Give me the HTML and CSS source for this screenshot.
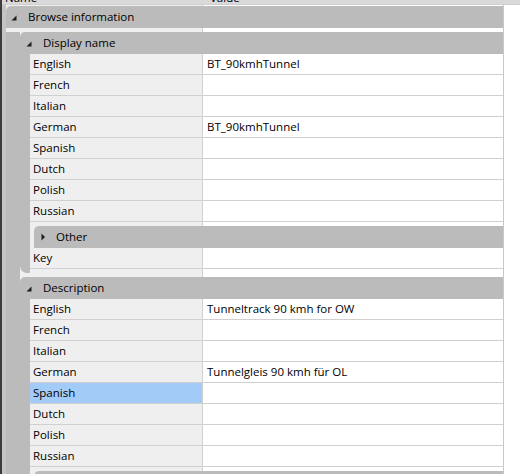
FILE: index.html
```html
<!DOCTYPE html>
<html>
<head>
<meta charset="utf-8">
<link rel="stylesheet" href="styles.css">
</head>
<body>
<div class="app">
  <div class="edge"></div>
  <div class="main">
    <div class="colhead"><span class="ch ch-name">Name</span><span class="ch ch-value">Value</span></div>
    <div class="grid">
      <section class="cat top">
        <div class="cat-head"><svg class="tri" width="6" height="6" viewBox="0 0 6 6"><polygon points="5.5,0.5 5.5,5.5 0.5,5.5"/></svg><span>Browse information</span></div>
        <div class="cat-body outer-body">
          <section class="cat">
            <div class="cat-head"><svg class="tri" width="6" height="6" viewBox="0 0 6 6"><polygon points="5.5,0.5 5.5,5.5 0.5,5.5"/></svg><span>Display name</span></div>
            <div class="cat-body">
              <div class="row"><div class="pname">English</div><div class="pval">BT_90kmhTunnel</div></div>
              <div class="row"><div class="pname">French</div><div class="pval"></div></div>
              <div class="row"><div class="pname">Italian</div><div class="pval"></div></div>
              <div class="row"><div class="pname">German</div><div class="pval">BT_90kmhTunnel</div></div>
              <div class="row"><div class="pname">Spanish</div><div class="pval"></div></div>
              <div class="row"><div class="pname">Dutch</div><div class="pval"></div></div>
              <div class="row"><div class="pname">Polish</div><div class="pval"></div></div>
              <div class="row"><div class="pname">Russian</div><div class="pval"></div></div>
              <section class="cat collapsed">
                <div class="cat-head"><svg class="tri-c" width="5" height="8" viewBox="0 0 5 8"><polygon points="0.5,0.5 4,4 0.5,7.5"/></svg><span>Other</span></div>
              </section>
              <div class="row"><div class="pname">Key</div><div class="pval"></div></div>
            </div>
          </section>
          <section class="cat">
            <div class="cat-head"><svg class="tri" width="6" height="6" viewBox="0 0 6 6"><polygon points="5.5,0.5 5.5,5.5 0.5,5.5"/></svg><span>Description</span></div>
            <div class="cat-body">
              <div class="row"><div class="pname">English</div><div class="pval">Tunneltrack 90 kmh for OW</div></div>
              <div class="row"><div class="pname">French</div><div class="pval"></div></div>
              <div class="row"><div class="pname">Italian</div><div class="pval"></div></div>
              <div class="row"><div class="pname">German</div><div class="pval">Tunnelgleis 90 kmh für OL</div></div>
              <div class="row selected"><div class="pname">Spanish</div><div class="pval"></div></div>
              <div class="row"><div class="pname">Dutch</div><div class="pval"></div></div>
              <div class="row"><div class="pname">Polish</div><div class="pval"></div></div>
              <div class="row"><div class="pname">Russian</div><div class="pval"></div></div>
              <section class="cat collapsed">
                <div class="cat-head"><svg class="tri-c" width="5" height="8" viewBox="0 0 5 8"><polygon points="0.5,0.5 4,4 0.5,7.5"/></svg><span>Other</span></div>
              </section>
            </div>
          </section>
        </div>
      </section>
    </div>
  </div>
</div>
</body>
</html>
```

FILE: styles.css
```css
html, body {
  margin: 0;
  padding: 0;
  background: #ffffff;
}
body {
  font-family: "Open Sans", "Noto Sans", sans-serif;
  font-size: 11.5px;
  color: #000;
  overflow: hidden;
  width: 520px;
  height: 474px;
}
.app {
  display: flex;
  height: 474px;
  overflow: hidden;
}
.edge {
  width: 2px;
  flex: none;
  background: #3c3c3c;
}
.main {
  flex: 1;
  display: flex;
  flex-direction: column;
  min-width: 0;
}
.colhead {
  height: 20px;
  margin-top: -16px;
  background: #d9d9d9;
  border-bottom: 1px solid #d0d0d0;
  display: flex;
  align-items: flex-end;
  flex: none;
  line-height: 14px;
}
.ch {
  display: block;
  height: 16px;
  margin-bottom: -3px;
}
.ch-name {
  width: 202px;
  padding-left: 3px;
}
.ch-value {
  padding-left: 3px;
}
.grid {
  flex: 1;
  position: relative;
  padding-left: 4px;
  background: linear-gradient(to right,
    #c4c4c4 0, #c4c4c4 4px,
    #efefef 4px, #efefef 200px,
    #d0d0d0 200px, #d0d0d0 201px,
    #ffffff 201px, #ffffff 501px,
    #c8c8c8 501px, #c8c8c8 502px,
    #ffffff 502px);
}
.cat {
  margin-top: 4px;
}
.cat.top {
  margin-top: 1px;
  width: 497px;
}
.cat-head {
  height: 22px;
  background: #bbbbbb;
  border-top-left-radius: 5px;
  display: flex;
  align-items: center;
  padding-left: 6px;
}
.cat.top > .cat-head {
  padding-left: 5px;
}
.tri {
  display: block;
  fill: #1e1e1e;
  margin-right: 11px;
  margin-top: 1px;
}
.cat-head span {
  display: block;
  line-height: 16px;
}
.cat-body {
  border-left: 10px solid #bbbbbb;
  border-bottom-left-radius: 7px;
  padding-bottom: 4px;
}
.cat-body.outer-body {
  border-left-width: 14px;
  border-bottom-left-radius: 0;
  padding-bottom: 0;
}
.cat.collapsed {
  margin-left: 4px;
}
.cat.collapsed > .cat-head {
  padding-left: 7px;
}
.tri-c {
  display: block;
  fill: #1e1e1e;
  margin-right: 10px;
}
.row {
  display: flex;
  height: 20px;
  border-bottom: 1px solid #d0d0d0;
  line-height: 20px;
}
.pname {
  width: 169px;
  padding-left: 3px;
  flex: none;
}
.row.selected .pname {
  background: #a3cbf8;
}
.pval {
  flex: 1;
  padding-left: 5px;
}
```
